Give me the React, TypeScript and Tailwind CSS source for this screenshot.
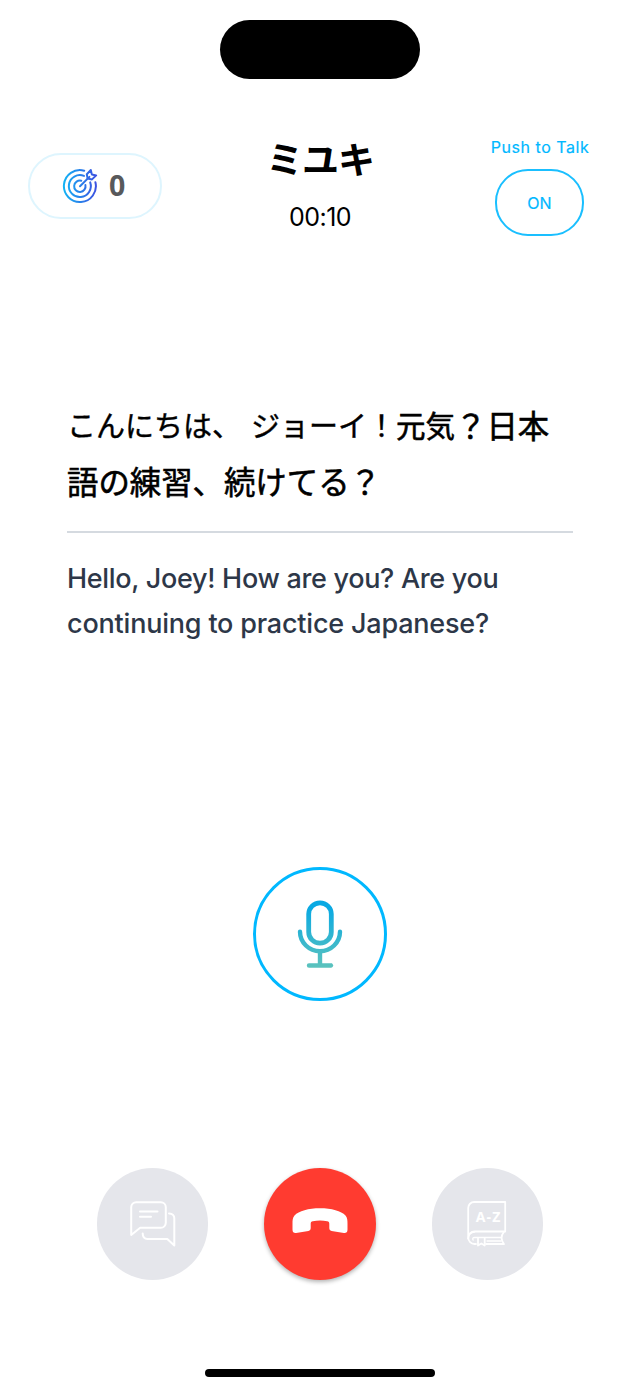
import type { ReactNode } from "react";

const JP_FONT = "font-['Noto_Sans_CJK_JP',sans-serif]";

function TargetIcon() {
  return (
    <svg width="36" height="36" viewBox="0 0 36 36" fill="none" stroke="url(#target)" strokeWidth="2" strokeLinecap="round" strokeLinejoin="round">
      <defs>
        <linearGradient id="target" x1="1" y1="18" x2="35" y2="18" gradientUnits="userSpaceOnUse">
          <stop offset="0" stopColor="#12b5f5" />
          <stop offset="1" stopColor="#3d4fe0" />
        </linearGradient>
      </defs>
      <path d="M22.2 2.7A16 16 0 1 0 33.4 14.2" />
      <path d="M22 7.9A11 11 0 1 0 28.2 14.4" />
      <path d="M19.3 12.8A5.7 5.7 0 1 0 23.4 17" />
      <path d="M18 18.3 27.4 8.9" />
      <path d="M25.6 10.6 24.8 6.2 28.8 2 29.8 6.4 34.2 7.4 30 11.4Z" />
    </svg>
  );
}

function MicIcon() {
  return (
    <svg width="48" height="70" viewBox="0 0 48 70" fill="none" strokeLinecap="round">
      <defs>
        <linearGradient id="mic" x1="0" y1="8" x2="0" y2="68" gradientUnits="userSpaceOnUse">
          <stop offset="0" stopColor="#09a9e3" />
          <stop offset="1" stopColor="#5bc2bd" />
        </linearGradient>
      </defs>
      <rect x="12.7" y="3.8" width="22.6" height="40.4" rx="11.3" stroke="url(#mic)" strokeWidth="4.8" />
      <path d="M4 32.8a20 19.4 0 0 0 40 0" stroke="url(#mic)" strokeWidth="4.4" />
      <path d="M24 53v13M13 66.5h22l.01.01" stroke="url(#mic)" strokeWidth="4.4" />
    </svg>
  );
}

function ChatIcon() {
  return (
    <svg width="46" height="46" viewBox="0 0 46 46" fill="none" stroke="#fff" strokeWidth="2" strokeLinecap="round" strokeLinejoin="round">
      <path d="M1.2 34V6.2a5 5 0 0 1 5-5h24.6a5 5 0 0 1 5 5v15.6a5 5 0 0 1-5 5H10.2Z" />
      <path d="M10 10.4h17.5M10 15.8H21" />
      <path d="M39 12.4c3.4.2 5.3 1.8 5.3 4.8v27.3l-7-6.5H17.6c-3 0-4.9-2-4.9-5.4" />
    </svg>
  );
}

function DictionaryIcon() {
  return (
    <svg width="40" height="46" viewBox="0 0 40 46" fill="none" stroke="#fff" strokeWidth="1.8" strokeLinecap="round" strokeLinejoin="round">
      <path d="M1.2 37.5V7a6 6 0 0 1 6-6h31v29.5H7.5a6.2 6.2 0 0 0 0 12.5H9" />
      <path d="M1.2 37.5c0-3.8 2.6-6.7 6.3-6.7M37 30.8c-3 3.8-3 8.4 0 12.2H19" />
      <path d="M34 36.5H7.5c-1.7 0-2.3 1.3-1.3 2.6M20 40h14" strokeWidth="1.3" />
      <path d="M11 37.5v7l3.3-2 3.4 2v-7" />
      <text x="8.8" y="21.2" textLength="24.5" fill="#fff" stroke="none" className="font-['Open_Sans',sans-serif] text-[14px] font-bold">A-Z</text>
    </svg>
  );
}

function HangUpIcon() {
  return (
    <svg width="56" height="26" viewBox="0 0 56 26" fill="#fff">
      <path d="M28 .3C16.5.3 6.8 3 2.5 7.5.6 9.500.5 12.5.5 15.5v6.3c0 2.300 1.4 3.5 3.6 3.2l12.3-2.1c1.6-.3 2.3-1.2 2.3-2.800v-4.300c0-1.500.6-2.200 2.100-2.500 4.600-1 9.800-1 14.400 0 1.500.3 2.100 1 2.100 2.500v4.300c0 1.600.7 2.500 2.300 2.800l12.300 2.100c2.200.3 3.600-.9 3.600-3.200v-6.300c0-3-.1-6-2-8C49.200 3 39.500.3 28 .3Z" />
    </svg>
  );
}

function RoundButton({ label, className, children }: { label: string; className: string; children: ReactNode }) {
  return (
    <button aria-label={label} className={`flex size-[111.5px] items-center justify-center rounded-full ${className}`}>
      {children}
    </button>
  );
}

export default function App() {
  return (
    <div className="flex h-[1388px] w-[640px] flex-col overflow-hidden bg-white font-['Inter',sans-serif] text-black">
      {/* Dynamic island */}
      <div className="mx-auto mt-[20px] h-[59px] w-[200px] shrink-0 rounded-full bg-black" />

      <header className="grid h-[200px] shrink-0 grid-cols-[200px_240px_200px] items-start">
        <div className="mt-[74px] ml-7 flex h-[66px] w-[134px] items-center gap-[11px] rounded-full border-2 border-[#def5fe] pl-[32px]">
          <TargetIcon />
          <span className="-mt-0.5 font-['Open_Sans',sans-serif] text-[28.5px] leading-none font-bold text-[#58595b]">0</span>
        </div>

        <div className="flex flex-col items-center pt-[55px]">
          <h1 className={`${JP_FONT} text-[37px] leading-[48px] font-bold tracking-[-1.2px]`}>ミユキ</h1>
          <p className="mt-[19px] text-[25px] leading-[32px] tracking-[-0.5px]">00:10</p>
        </div>

        <div className="flex flex-col items-center pt-[58px] text-[#00b8ff]">
          <span className="text-[16px] leading-[20px] tracking-[0.55px] whitespace-nowrap [-webkit-text-stroke:0.2px]">Push to Talk</span>
          <button className="mt-[12px] mr-px h-[67px] w-[89px] rounded-[33px] border-2 border-[#1abfff] text-[16px] [-webkit-text-stroke:0.2px]">ON</button>
        </div>
      </header>

      <main className="mx-[67px] h-[588px] shrink-0 pt-[118px]">
        <div className={`${JP_FONT} text-[31.4px] leading-[55.6px] whitespace-nowrap [-webkit-text-stroke:0.6px]`}>
          <p className="flex">
            <span className="text-[29px] [-webkit-text-stroke:0.4px]">こんにちは、</span>
            <span className="ml-[10px] text-[29px] [-webkit-text-stroke:0.4px]">ジョーイ！</span>
            <span className="text-[29.5px]">元気</span>
            <span>？日本</span>
          </p>
          <p>語の練習、続けてる？</p>
        </div>
        <hr className="mt-[23px] border-t-2 border-[#d5dae0]" />
        <div className="mt-[24px] text-[27px] leading-[44.5px] font-medium whitespace-nowrap text-[#2d3748]">
          <p className="tracking-[-0.31px]">Hello, Joey! How are you? Are you</p>
          <p className="tracking-[-0.2px]">continuing to practice Japanese?</p>
        </div>
      </main>

      <button aria-label="Record" className="mx-auto flex size-[134px] shrink-0 items-center justify-center rounded-full border-[3px] border-[#00b8ff]">
        <MicIcon />
      </button>

      <nav className="mt-[167px] flex h-28 shrink-0 justify-center gap-[55.8px]">
        <RoundButton label="Chat" className="bg-[#e5e6eb]">
          <ChatIcon />
        </RoundButton>
        <RoundButton label="Hang up" className="bg-[#ff3b30] pb-1.5 shadow-[0_2px_4px_rgba(0,0,0,0.3)]">
          <HangUpIcon />
        </RoundButton>
        <RoundButton label="Dictionary" className="bg-[#e5e6eb]">
          <DictionaryIcon />
        </RoundButton>
      </nav>

      {/* Home indicator */}
      <div className="mx-auto mt-[89px] h-2 w-[230px] shrink-0 rounded-full bg-black" />
    </div>
  );
}
